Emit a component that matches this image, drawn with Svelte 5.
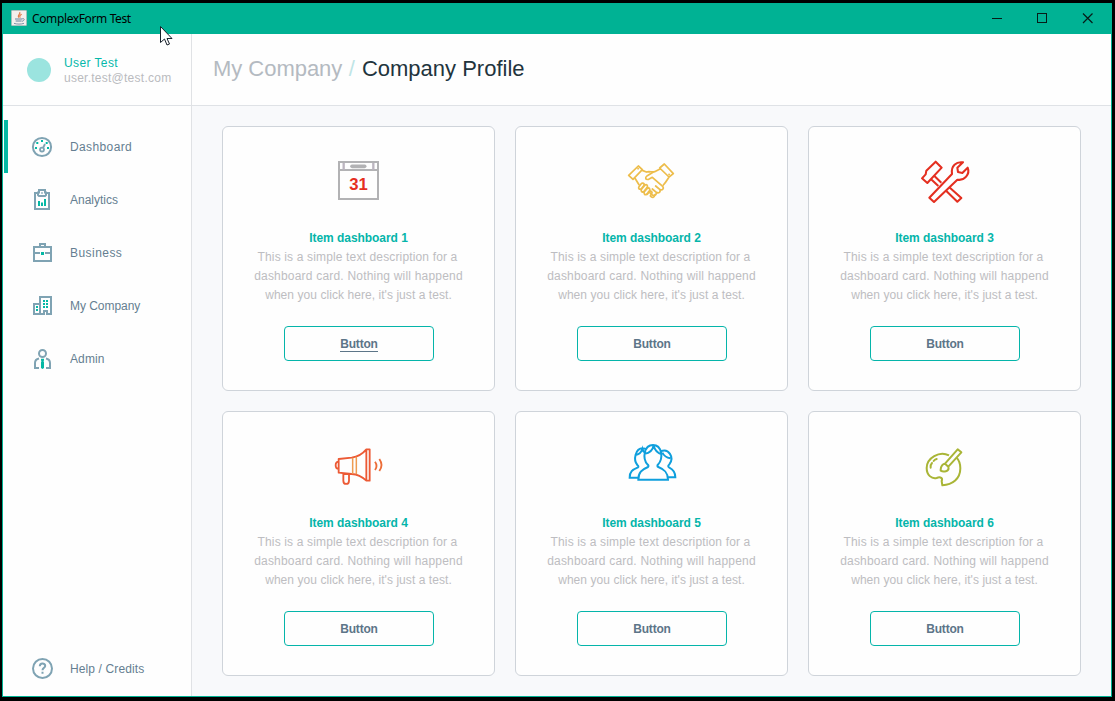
<script>
  const nav = ['Dashboard', 'Analytics', 'Business', 'My Company', 'Admin'];
  const navSpacing = [0.38, 0, 0.45, -0.04, 0.12];
  const cards = [
    { view: '0 0 291 210', color: '#b2b2b4' },
    { view: '-21 0 291 210', color: '#edbd4b' },
    { view: '-12 0 291 210', color: '#e42f20' },
    { view: '-15 -15 291 210', color: '#ec5a35' },
    { view: '-21 -15 291 210', color: '#0f9fdd' },
    { view: '-12 -15 291 210', color: '#a9b536' }
  ];
</script>

<div class="desktop">
  <div class="window">
    <header class="titlebar">
      <svg class="java" width="16" height="16" viewBox="0 0 48 48">
        <rect x="1" y="1" width="46" height="46" rx="3" fill="#f3efed" stroke="#a5aaae" stroke-width="2" />
        <path d="M26 6c5 6-9 9-3 17M32 13c-7 4-7 6-4 10" fill="none" stroke="#df7846" stroke-width="3.500" />
        <path d="M12 27h22M14 33h18" stroke="#66829a" stroke-width="3" />
        <path d="M34 26c9-2 6 7-1 8M9 40c8 3 22 3 30 0" fill="none" stroke="#66829a" stroke-width="2.500" />
      </svg>
      <span class="app-name">ComplexForm Test</span>
      <svg class="controls" width="110" height="20" viewBox="0 0 110 20" shape-rendering="crispEdges" fill="none" stroke="#071c18">
        <path d="M2 10.5h10" />
        <rect x="47.5" y="5.5" width="9" height="9" />
        <path d="M93 5.500l9.500 9.500M102.500 5.500l-9.500 9.500" shape-rendering="auto" stroke-width="1.2" />
      </svg>
    </header>

    <div class="body">
      <aside>
        <div class="user">
          <span class="avatar"></span>
          <div class="who">
            <div class="name">User Test</div>
            <div class="mail">user.test@test.com</div>
          </div>
        </div>
        <nav>
          {#each nav as label, i}
            <div class="item" class:active={i === 0}>
              <svg width="24" height="24" viewBox="0 0 24 24" fill="none" stroke="#7fa3b3" stroke-width="2">
                {#if i === 0}
                  <circle cx="12" cy="13" r="9.1" />
                  <circle cx="12" cy="15.600" r="2" stroke-width="1.8" />
                  <path d="M13 14l2-4" stroke-width="1.8" />
                  <path d="M11 6h2v2h-2zM6.300 8h2v2h-2zM15.700 8h2v2h-2zM5 13h2v2H5zM17 13h2v2h-2z" fill="#05b8a5" stroke="none" />
                {:else if i === 1}
                  <path d="M8 6H5v16h14V6h-3" />
                  <path d="M8 5.500V8l1 1h6l1-1V5.500h-1V3H9v2.500z" />
                  <path d="M11.200 5.200h1.600v1.600h-1.600z" fill="#7fa3b3" stroke="none" />
                  <path d="M8 14h2v5H8zM11 15.500h2V19h-2zM14 12h2v7h-2z" fill="#05b8a5" stroke="none" />
                {:else if i === 2}
                  <path d="M4 7h17v14H4zM10 7V4h5v3M4 13h6M15 13h6" />
                  <path d="M11 12h3v3h-3z" fill="#05b8a5" stroke="none" />
                {:else if i === 3}
                  <path d="M10 11H4v10h6zM10 21V4h11v17h-4v-3h-3v3z" />
                  <path d="M6 13h2v2H6zM6 16h2v2H6zM13 7h2v2h-2zM16 7h2v2h-2zM13 10h2v2h-2zM16 10h2v2h-2zM13 13h2v2h-2zM16 13h2v2h-2z" fill="#05b8a5" stroke="none" />
                {:else}
                  <circle cx="12.500" cy="7.500" r="3.500" />
                  <path d="M9 22H5v-5c0-2.500 1.500-4 4-4.500M16 22h4v-5c0-2.500-1.500-4-4-4.500" />
                  <path d="M11 12.700h3v1.600l-.500 1 .500 1V22l-1.500 1L11 22v-5.700l.500-1-.500-1z" fill="#05b8a5" stroke="none" />
                {/if}
              </svg>
              <span style="letter-spacing: {navSpacing[i]}px">{label}</span>
            </div>
          {/each}
        </nav>
        <div class="item help">
          <svg width="24" height="24" viewBox="0 0 24 24" fill="none" stroke="#7fa3b3" stroke-width="2">
            <circle cx="12.500" cy="12.500" r="9.500" />
            <path d="M9.800 10.300c0-3.600 5.400-3.500 5.400-.400 0 1.900-2.700 2-2.700 4.400M12.500 15.700v2" />
          </svg>
          <span>Help / Credits</span>
        </div>
      </aside>

      <main>
        <h1><span class="crumb">My Company</span><span class="slash">/</span><span class="current">Company Profile</span></h1>
        <section class="grid">
          {#each cards as card, i}
            <article>
              <svg class="picture" width="97" height="70" viewBox={card.view} fill="none" stroke={card.color} stroke-width="6">
                {#if i === 0}
                  <path d="M87 51h117v111H87zM87 75h117" />
                  <path d="M101 54v20M190 54v20" stroke="#bcb5c0" stroke-width="7" />
                  <path d="M126 64h38" stroke-width="11" stroke-linecap="round" />
                  <text x="145.500" y="136" text-anchor="middle" textLength="55" fill="#e52f1f" stroke="none">31</text>
                {:else if i === 1}
                  <g stroke-width="5.200" stroke-linejoin="round" stroke-linecap="round">
                    <path d="M56 91l29-28 12 11-28 29zM149 69l14-12 27 29-13 10zM97 76l12 5h10M75 100l12 19M109 81c9-4 18 2 25-1l16-8M177 96c-6 9-9 15-17 24" />
                    <path d="M129 82l-17 10c-9 7-5 13 4 11l11-6 31 27c5 7-1 13-8 10l-13-11M150 134c2 9-5 12-11 8l-12-10M139 143c0 9-7 10-13 6l-10-9" />
                    <path d="M87 125l6-8c5-6 12-1 8 5l-7 9c-6 4-10-1-7-6zM95 132l9-11c6-5 11 1 7 7l-9 11c-6 5-11-1-7-7zM103 140l8-9c6-5 11 1 7 7l-7 9c-6 5-11 0-8-7zM112 148l6-8c6-4 10 1 7 6l-4 7c5 6 12 6 14-4" />
                    <path d="M84 71h.5M177 88h.5" />
                  </g>
                {:else if i === 2}
                  <g stroke-width="6.200" stroke-linejoin="round">
                    <path d="M66 100l11-12 2-11 28-27 18 18-43 46zM104 94l20 19M95 104l20 19M148 127l36 32-12 11-33-32" />
                    <path d="M88 158l68-71c-4-25 13-38 33-35l-17 16 2 13 13 3 16-16c8 20-10 40-31 36l-70 67z" />
                  </g>
                {:else if i === 3}
                  <g stroke-width="5.500" stroke-linejoin="round">
                    <path d="M71 72l39-4c21-3 34-13 44-25h10v94h-10c-14-13-27-19-44-20l-39-4zM154 43v94M71 80c-12 0-12 22 0 22M85 114v23c0 13 17 13 17 0v-21" />
                    <path d="M113 68v48M124 65v53" stroke="#ee9b51" stroke-width="4.500" />
                    <path d="M180 80q9 13 0 25M193 72q13 18 0 36" stroke="#ec6d38" />
                  </g>
                {:else if i === 4}
                  <path d="M85 134c0-22 10-30 29-38 2-2 2-5-1-7-17-19-11-59 16-59s32 40 15 59c-3 2-2 6 1 7 18 7 29 16 29 38zM104 56q23-3 27-25 4 20 24 27M85 128H59c0-18 8-24 25-31 3-2 0-5-2-7C69 75 76 40 98 40c6 0 9 2 12 5M76 60q16-2 21-18 2 8 8 11M151 50c25-13 43 18 27 38-4 4-5 7 0 10 12 6 18 15 18 29h-22M157 53q7 14 24 17" stroke-width="6" />
                {:else}
                  <g stroke-width="6" stroke-linejoin="round">
                    <path d="M147 61c-29-15-67 8-67 38 0 22 15 33 30 30 12-5 19 1 15 9l2 13c31-1 54-20 54-51 0-15-5-26-12-33" />
                    <path d="M122 104c0-11 7-18 13-18l38-43 11 9-39 43c4 16-16 16-23 12zM135 86l10 9" />
                    <path d="M92 98c-1-7 1-11 4-14M101 78c2-3 5-5 9-6" stroke-linecap="round" />
                  </g>
                {/if}
              </svg>
              <h2>Item dashboard {i + 1}</h2>
              <p><span class="l1">This is a simple text description for a</span><br /><span class="l2">dashboard card. Nothing will happend</span><br /><span class="l3">when you click here, it's just a test.</span></p>
              <button class:focused={i === 0}><span>Button</span></button>
            </article>
          {/each}
        </section>
      </main>
    </div>
  </div>
  <svg class="pointer" width="14" height="21" viewBox="0 0 14 21">
    <path d="M.5.5v16l4-3.500 2.500 6 2.500-1-2.500-5.500h5z" fill="#fff" stroke="#17202b" stroke-linejoin="round" />
  </svg>
</div>

<style>
  :global(body) { margin: 0; background: #000; }
  .desktop { width: 1115px; height: 701px; box-sizing: border-box; padding: 3px 3px 4px 2px; background: #000; overflow: hidden; position: relative; font: 12px/15px "Liberation Sans", Arial, sans-serif; }
  .window { height: 694px; box-sizing: border-box; border: 1px solid #00b294; display: flex; flex-direction: column; background: #fefefe; }
  .titlebar { height: 30px; flex: none; background: #00b294; display: flex; align-items: center; padding-left: 8px; }
  .java { margin-bottom: 2px; }
  .app-name { margin-left: 5px; font: 12px/20px "Noto Sans", "Open Sans", sans-serif; color: #000; letter-spacing: -0.38px; }
  .controls { margin-left: auto; margin-right: 11px; margin-bottom: 2px; }
  .body { flex: 1; display: flex; min-height: 0; }
  aside { width: 188px; border-right: 1px solid #e0e2e5; display: flex; flex-direction: column; flex: none; }
  .user { height: 71px; border-bottom: 1px solid #dfe2e6; display: flex; align-items: center; padding-left: 24px; }
  .avatar { width: 24px; height: 24px; border-radius: 50%; background: #9be4df; margin-right: 13px; }
  .who { padding-top: 2px; }
  .name { color: #05b8aa; letter-spacing: 0.4px; }
  .mail { color: #babbbe; letter-spacing: 0.25px; }
  nav { padding-top: 14px; }
  .item { height: 53px; box-sizing: border-box; padding: 0 0 1px 27px; display: flex; align-items: center; color: #657e91; }
  .item span { margin-left: 16px; padding-top: 3px; }
  .active { margin-left: 1px; border-left: 4px solid #05b8a5; padding-left: 22px; }
  .help { margin-top: auto; margin-bottom: 1px; }
  .help span { letter-spacing: 0.12px; }
  main { flex: 1; min-width: 0; background: #f8f9fb; }
  h1 { height: 71px; box-sizing: content-box; border-bottom: 1px solid #dfe2e6; margin: 0; padding-left: 21px; background: #fefefe; font-size: 22px; line-height: 69px; font-weight: 400; white-space: nowrap; }
  .crumb { color: #b4bac1; letter-spacing: -0.03px; }
  .slash { color: #bfe5e6; margin: 0 7px 0 6.500px; }
  .current { color: #22343d; }
  .grid { display: grid; grid-template-columns: repeat(3, 273px); grid-auto-rows: 265px; gap: 20px; padding: 20px 30px; }
  article { box-sizing: border-box; border: 1px solid #cfd4da; border-radius: 6px; background: #fefefe; display: flex; flex-direction: column; align-items: center; padding-top: 18px; }
  .picture { flex: none; }
  .picture text { font: bold 50px "Liberation Sans", Arial, sans-serif; }
  h2 { font-size: 12px; line-height: 19px; margin: 14px 0 0; color: #05b5aa; letter-spacing: -0.05px; }
  p { margin: 0; line-height: 19px; color: #bdbdc1; text-align: center; white-space: nowrap; }
  .l1 { letter-spacing: 0.15px; margin-right: 2px; }
  .l2 { letter-spacing: 0.2px; }
  .l3 { letter-spacing: 0.06px; }
  button { width: 150px; height: 35px; flex: none; margin: 21px 0 0; padding: 2px 0 0 1px; border: 1px solid #05b5aa; border-radius: 4px; background: #fefefe; color: #5d7588; font: bold 12px/14px "Liberation Sans", Arial, sans-serif; letter-spacing: -0.2px; }
  button span { display: inline-block; border-bottom: 1px solid transparent; }
  .focused span { border-color: #5d7588; }
  .pointer { position: absolute; left: 160px; top: 26px; }
</style>
